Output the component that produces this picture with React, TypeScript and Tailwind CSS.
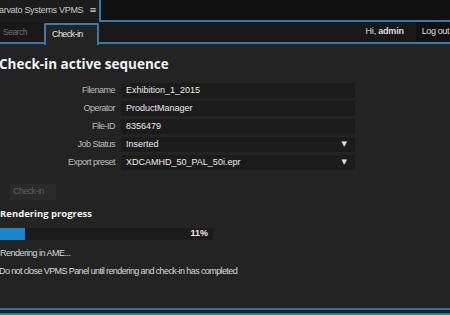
import React from "react";

const rows: { label: string; value: string; select?: boolean }[] = [
  { label: "Filename", value: "Exhibition_1_2015" },
  { label: "Operator", value: "ProductManager" },
  { label: "File-ID", value: "8356479" },
  { label: "Job Status", value: "Inserted", select: true },
  { label: "Export preset", value: "XDCAMHD_50_PAL_50i.epr", select: true },
];

const sans = { fontFamily: '"Liberation Sans", Arial, sans-serif' };

export default function App() {
  return (
    <div
      className="w-[450px] h-[315px] overflow-hidden bg-[#232323] text-[9px] text-[#d0d0d0] flex flex-col"
      style={sans}
    >
      {/* top bar */}
      <div className="h-[22px] flex bg-[#111111] shrink-0">
        <div className="w-[101px] h-full bg-[#1c1c1c] border-r-2 border-[#3a7aa8] flex items-center text-[#c8c8c8] whitespace-nowrap">
          <span className="-ml-[1px] tracking-[-0.3px]">arvato Systems VPMS</span>
          <span className="ml-[6px] text-[9px]" style={{ fontFamily: '"DejaVu Sans", sans-serif' }}>≡</span>
        </div>
        <div className="flex-1 h-full border-b-2 border-[#3a7aa8]" />
      </div>
      {/* tab row */}
      <div className="h-[22px] flex bg-[#181818] shrink-0">
        <div className="w-[44px] h-full border-b-2 border-[#3a7aa8] flex items-center pl-[3px] text-[#6e6e6e] text-[8.5px] tracking-[-0.5px]">
          Search
        </div>
        <div className="w-[55px] h-full mt-[1px] bg-[#232323] border-t-2 border-x-2 border-[#3a7aa8] rounded-t-[2px] flex items-center pl-[6px] text-[#e8e8e8] tracking-[-0.6px]">
          Check-in
        </div>
        <div className="flex-1 h-full border-b-2 border-[#3a7aa8] flex items-center justify-end">
          <span className="text-[#dcdcdc] tracking-[-0.2px]">
            Hi, <b className="font-bold">admin</b>
          </span>
          <span className="ml-[12px] h-full bg-[#111111] flex items-center pl-[6px] pr-[1px] text-[#dcdcdc] whitespace-nowrap tracking-[-0.4px]">
            Log out
          </span>
        </div>
      </div>
      {/* content */}
      <div className="flex-1 flex flex-col pt-[11px]">
        <div
          className="text-[13.5px] font-bold text-[#f2f2f2] leading-[18px] -ml-[1px]"
          style={{ fontFamily: '"Open Sans", "DejaVu Sans", sans-serif' }}
        >
          Check-in active sequence
        </div>
        <div className="mt-[10px] flex flex-col gap-[3px]">
          {rows.map((r) => (
            <div key={r.label} className="flex items-center h-[15px]">
              <div className="w-[115px] text-right text-[#bdbdbd] tracking-[-0.5px]">{r.label}</div>
              <div className="ml-[6px] w-[234px] h-[15px] bg-[#1b1b1b] flex items-center pl-[5px] pr-[8px] text-[#ececec]">
                <span className="flex-1">{r.value}</span>
                {r.select && (
                  <span className="text-[7px] text-[#e0e0e0]" style={{ fontFamily: '"DejaVu Sans", sans-serif' }}>
                    ▼
                  </span>
                )}
              </div>
            </div>
          ))}
        </div>
        <div className="mt-[14px] ml-[10px] w-[46px] h-[16px] bg-[#2a2a2a] flex items-center pl-[3px] text-[#5e5e5e] tracking-[-0.6px]">
          Check-in
        </div>
        <div
          className="mt-[6px] text-[9.5px] font-bold text-[#f0f0f0] leading-[16px]"
          style={{ fontFamily: '"Open Sans", "DejaVu Sans", sans-serif' }}
        >
          Rendering progress
        </div>
        <div className="mt-[6px] w-[213px] h-[12px] bg-[#1b1b1b] flex items-center relative">
          <div className="h-full w-[25px] bg-[#1b85cc]" />
          <span className="absolute right-[5px] font-bold text-[#e8e8e8]">11%</span>
        </div>
        <div className="mt-[6px] leading-[14px] text-[#d8d8d8] tracking-[-0.5px]">Rendering in AME...</div>
        <div className="mt-[4px] leading-[14px] text-[#d8d8d8] -ml-[1px] tracking-[-0.6px]">
          Do not close VPMS Panel until rendering and check-in has completed
        </div>
      </div>
      {/* bottom */}
      <div className="h-[7px] shrink-0 flex flex-col">
        <div className="h-[2px] bg-[#3a6f98]" />
        <div className="h-[3px] bg-[#1a1f28]" />
        <div className="h-[2px] bg-[#2a7f86]" />
      </div>
    </div>
  );
}
